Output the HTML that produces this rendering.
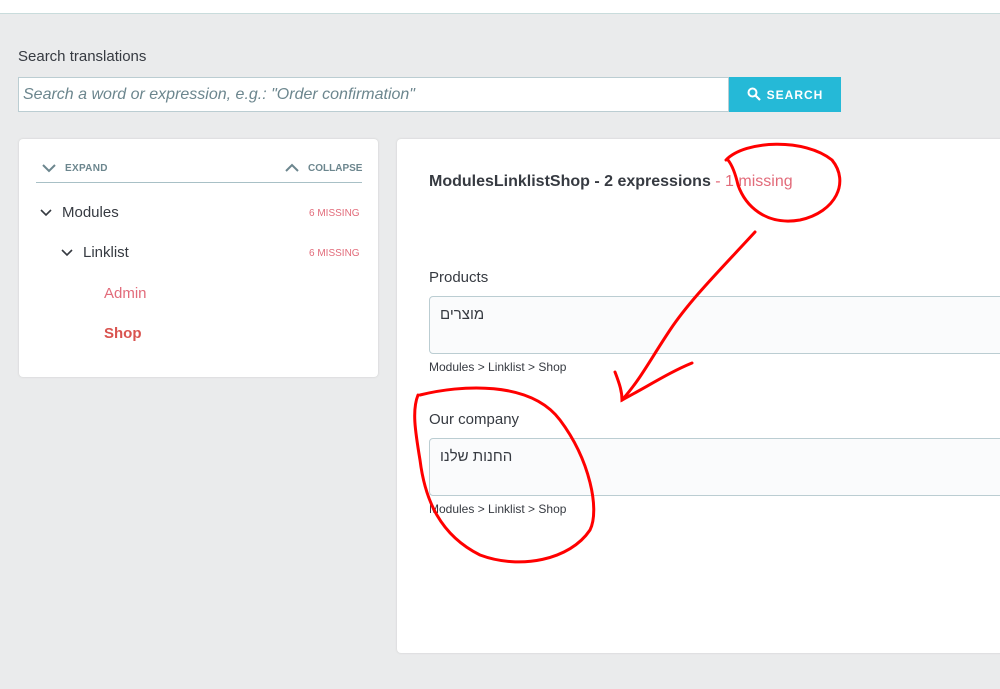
<!DOCTYPE html>
<html><head><meta charset="utf-8"><style>
body{margin:0;width:1000px;height:689px;background:#eaebec;font-family:"Liberation Sans","Noto Sans CJK JP",sans-serif;position:relative;overflow:hidden;color:#363a41}
.top{position:absolute;left:0;top:0;width:1000px;height:13px;background:#fff;border-bottom:1px solid #c9dcdc}
.abs{position:absolute}
.inp{left:18px;top:77px;width:711px;height:35px;background:#fff;border:1px solid #bbcdd2;box-sizing:border-box;font-style:italic;color:#6c868e;font-size:16px;line-height:34px;padding-left:4px}
.btn{left:729px;top:77px;width:112px;height:35px;background:#25b9d7;color:#fff;font-size:12px;font-weight:bold;letter-spacing:1px;line-height:36px;text-align:center}
.card{background:#fff;border-radius:4px;box-shadow:0 0 2px #ccc}
.sm{font-size:10px;font-weight:bold;color:#6c868e;letter-spacing:.3px}
.miss{font-size:10px;color:#e26b7a}
.field{left:429px;width:580px;height:58px;background:#fafbfc;border:1px solid #bbcdd2;border-radius:4px;box-sizing:border-box;font-size:15px;padding:9px 10px;direction:rtl;text-align:left}
.field span{direction:rtl;unicode-bidi:embed}
</style></head><body>
<div class="top"></div>
<div class="abs" style="left:18px;top:48px;font-size:15px">Search translations</div>
<div class="abs inp">Search a word or expression, e.g.: "Order confirmation"</div>
<div class="abs btn"><svg width="14" height="14" viewBox="0 0 14 14" style="vertical-align:-2px;margin-right:6px"><circle cx="5.5" cy="5.5" r="4" fill="none" stroke="#fff" stroke-width="2"/><path d="M8.5 8.5L13 13" stroke="#fff" stroke-width="2.2"/></svg>SEARCH</div>
<div class="abs card" style="left:19px;top:139px;width:359px;height:238px"></div>
<svg class="abs" style="left:42px;top:163px" width="14" height="10"><path d="M1 2l6 6 6-6" fill="none" stroke="#6c868e" stroke-width="2"/></svg>
<div class="abs sm" style="left:65px;top:163px">EXPAND</div>
<svg class="abs" style="left:285px;top:163px" width="14" height="10"><path d="M1 8l6-6 6 6" fill="none" stroke="#6c868e" stroke-width="2"/></svg>
<div class="abs sm" style="left:308px;top:163px;letter-spacing:0">COLLAPSE</div>
<div class="abs" style="left:36px;top:182px;width:326px;height:1px;background:#a8c0c6"></div>
<svg class="abs" style="left:40px;top:209px" width="12" height="8"><path d="M1 1l5 5 5-5" fill="none" stroke="#363a41" stroke-width="1.6"/></svg>
<div class="abs" style="left:62px;top:204px;font-size:15px">Modules</div>
<div class="abs miss" style="left:309px;top:208px">6 MISSING</div>
<svg class="abs" style="left:61px;top:249px" width="12" height="8"><path d="M1 1l5 5 5-5" fill="none" stroke="#363a41" stroke-width="1.6"/></svg>
<div class="abs" style="left:83px;top:244px;font-size:15px">Linklist</div>
<div class="abs miss" style="left:309px;top:248px">6 MISSING</div>
<div class="abs" style="left:104px;top:285px;font-size:15px;color:#e26b7a">Admin</div>
<div class="abs" style="left:104px;top:325px;font-size:15px;color:#d9534f;font-weight:bold">Shop</div>
<div class="abs card" style="left:397px;top:139px;width:620px;height:514px"></div>
<div class="abs" style="left:429px;top:173px;font-size:16px;font-weight:bold;color:#363a41">ModulesLinklistShop - 2 expressions <span style="font-weight:normal;color:#e26b7a">- 1 missing</span></div>
<div class="abs" style="left:429px;top:269px;font-size:15px">Products</div>
<div class="abs field" style="top:296px"><span>מוצרים</span></div>
<div class="abs" style="left:429px;top:360px;font-size:12px">Modules &gt; Linklist &gt; Shop</div>
<div class="abs" style="left:429px;top:411px;font-size:15px">Our company</div>
<div class="abs field" style="top:438px"><span>החנות שלנו</span></div>
<div class="abs" style="left:429px;top:502px;font-size:12px">Modules &gt; Linklist &gt; Shop</div>
<svg class="abs" style="left:0;top:0" width="1000" height="689" fill="none" stroke="#f00" stroke-width="3" stroke-linecap="round">
<path d="M726 160C745 140 805 138 832 160C850 182 836 212 800 220C765 226 745 205 738 185C735 172 732 165 728 160"/>
<path d="M755 232C720 270 690 300 670 330C650 360 640 380 622 400"/>
<path d="M615 372C620 385 622 392 622 400C650 385 670 372 692 363"/>
<path d="M420 395C460 385 530 380 560 420C590 460 600 510 590 530C570 560 520 570 480 555C440 535 425 500 420 460C415 430 412 410 418 395"/>
</svg>
</body></html>
